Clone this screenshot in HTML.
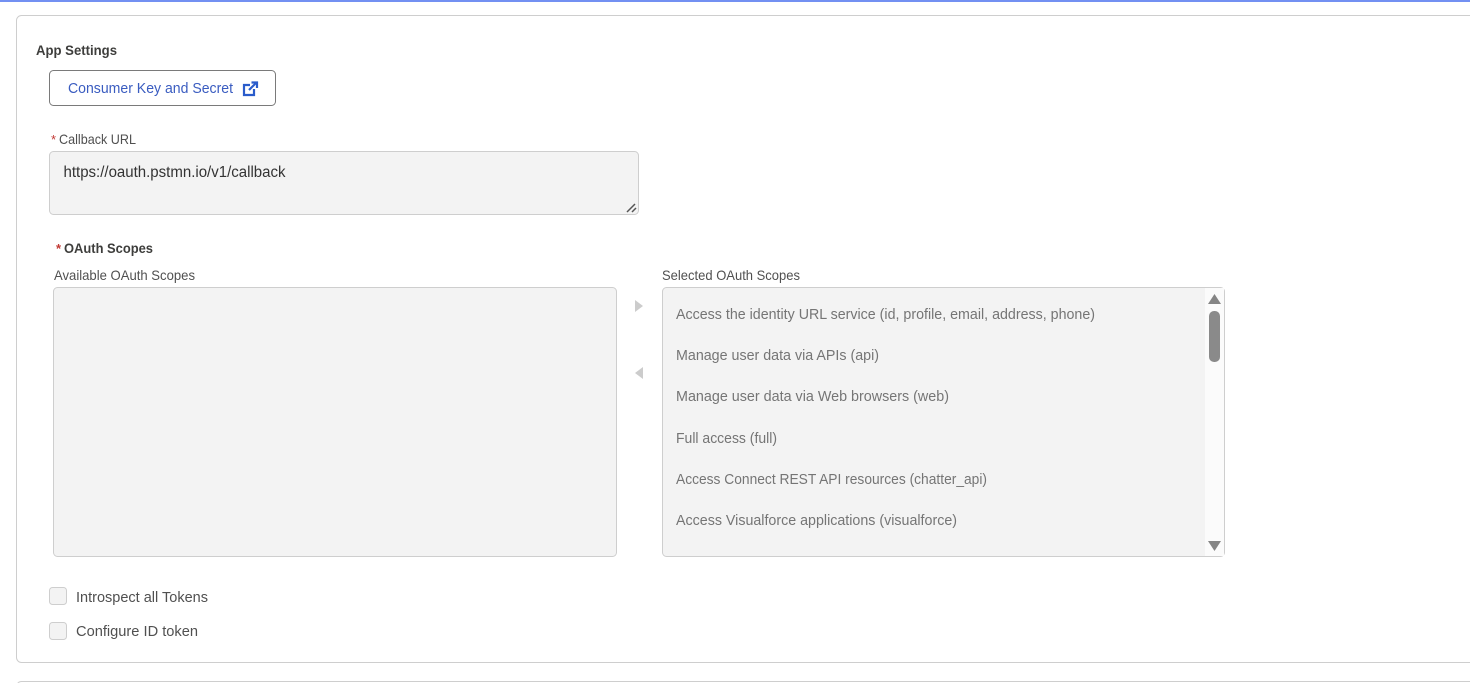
<!DOCTYPE html>
<html><head><meta charset="utf-8"><style>
html,body{margin:0;padding:0;background:#fff;width:1470px;height:683px;overflow:hidden}
svg{display:block}
text{font-family:"Liberation Sans",sans-serif;font-size:15px;fill:#444}
.b{font-weight:bold;font-size:13.5px;fill:#3e3e3c}
.l{font-size:14px;fill:#505050}
.i{fill:#757575;font-size:15px}
.r{fill:#c23934;font-size:13px}
</style></head><body>
<svg width="1470" height="683" viewBox="0 0 1470 683" xmlns="http://www.w3.org/2000/svg">
<rect x="0" y="0" width="1470" height="2" fill="#7390f2"/>
<rect x="16.5" y="15.5" width="1500" height="647" rx="5" fill="#fff" stroke="#cecece"/>
<rect x="16.5" y="681.5" width="1500" height="20" rx="5" fill="#fff" stroke="#cecece"/>
<text x="36" y="55" class="b" textLength="81" lengthAdjust="spacingAndGlyphs">App Settings</text>
<rect x="49.5" y="70.5" width="226" height="35" rx="4" fill="#fff" stroke="#7a7a7a"/>
<text x="68" y="93" style="fill:#3a5cc0" textLength="165" lengthAdjust="spacingAndGlyphs">Consumer Key and Secret</text>
<g fill="none" stroke="#2a5ccb" stroke-width="2.2">
<path d="M250 85H244V95H254V89"/>
<path d="M249 90L256 83"/>
<path d="M251.500 82.500H257V88"/>
</g>
<text x="51" y="144" class="r">*</text>
<text x="59" y="144" class="l" textLength="77" lengthAdjust="spacingAndGlyphs">Callback URL</text>
<rect x="49.500" y="151.500" width="589" height="63" rx="4" fill="#f3f3f3" stroke="#cecece"/>
<text x="63.500" y="177" style="fill:#333;font-size:15.500px" textLength="222" lengthAdjust="spacingAndGlyphs">https://oauth.pstmn.io/v1/callback</text>
<path d="M627 212L635 204M632 212L636 208" stroke="#555" stroke-width="1.500" fill="none"/>
<text x="56" y="253" class="r" style="font-weight:bold">*</text>
<text x="64" y="253" class="b" textLength="89" lengthAdjust="spacingAndGlyphs">OAuth Scopes</text>
<text x="54" y="280" class="l" textLength="141" lengthAdjust="spacingAndGlyphs">Available OAuth Scopes</text>
<text x="662" y="280" class="l" textLength="138" lengthAdjust="spacingAndGlyphs">Selected OAuth Scopes</text>
<rect x="53.500" y="287.500" width="563" height="269" rx="4" fill="#f3f3f3" stroke="#cecece"/>
<path d="M635 300L643 306L635 312Z" fill="#cccccc"/>
<path d="M643 367L635 373L643 379Z" fill="#cccccc"/>
<rect x="662.500" y="287.500" width="562" height="269" rx="4" fill="#f3f3f3" stroke="#cecece"/>
<rect x="1205" y="288" width="19" height="268" fill="#fbfbfb"/>
<path d="M1214.500 294L1221 304H1208Z" fill="#858585"/>
<rect x="1209" y="311" width="11" height="51" rx="5" fill="#8a8a8a"/>
<path d="M1208 541H1221L1214.500 551Z" fill="#858585"/>
<text x="676" y="319" class="i" textLength="419" lengthAdjust="spacingAndGlyphs">Access the identity URL service (id, profile, email, address, phone)</text>
<text x="676" y="360" class="i" textLength="203" lengthAdjust="spacingAndGlyphs">Manage user data via APIs (api)</text>
<text x="676" y="401" class="i" textLength="273" lengthAdjust="spacingAndGlyphs">Manage user data via Web browsers (web)</text>
<text x="676" y="443" class="i" textLength="101" lengthAdjust="spacingAndGlyphs">Full access (full)</text>
<text x="676" y="484" class="i" textLength="311" lengthAdjust="spacingAndGlyphs">Access Connect REST API resources (chatter_api)</text>
<text x="676" y="525" class="i" textLength="281" lengthAdjust="spacingAndGlyphs">Access Visualforce applications (visualforce)</text>
<rect x="49.500" y="587.500" width="17" height="17" rx="3" fill="#f3f3f3" stroke="#cecece"/>
<text x="76" y="602" style="fill:#505050" textLength="132" lengthAdjust="spacingAndGlyphs">Introspect all Tokens</text>
<rect x="49.500" y="622.500" width="17" height="17" rx="3" fill="#f3f3f3" stroke="#cecece"/>
<text x="76" y="636" style="fill:#505050" textLength="122" lengthAdjust="spacingAndGlyphs">Configure ID token</text>
</svg>
</body></html>
